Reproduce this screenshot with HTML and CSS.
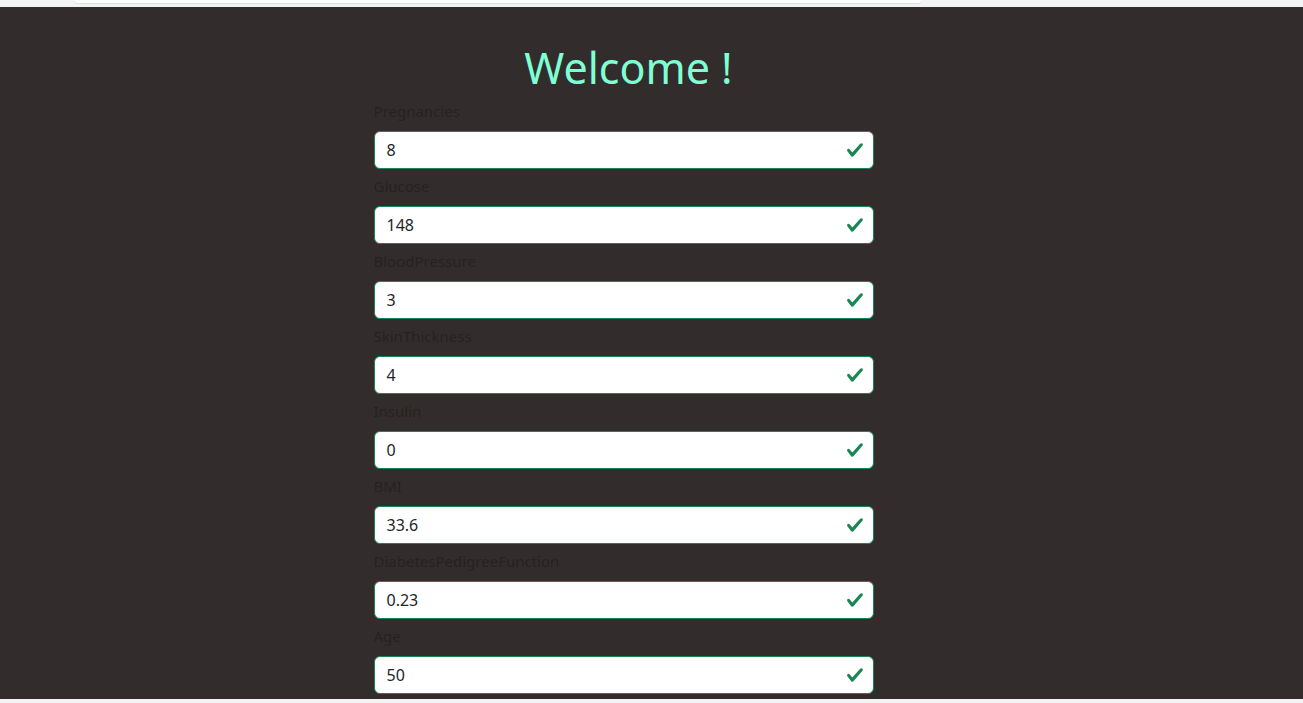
FILE: index.html
```html
<!DOCTYPE html>
<html>
<head>
<meta charset="utf-8">
<link rel="stylesheet" href="styles.css">
</head>
<body>
<div class="chrome-top"><div class="chrome-box"></div></div>
<main class="page">
  <div class="wrap">
    <h1 class="title">Welcome !</h1>
    <form class="form">
      <div class="field"><label class="label">Pregnancies</label><div class="control"><span class="value">8</span><svg class="check" viewBox="0 0 8 8"><path fill="#198754" d="M2.3 6.73.6 4.53c-.4-1.04.46-1.4 1.1-.8l1.1 1.4 3.4-3.8c.6-.63 1.6-.27 1.2.7l-4 4.6c-.43.5-.8.4-1.1.1z"/></svg></div></div>
      <div class="field"><label class="label">Glucose</label><div class="control"><span class="value">148</span><svg class="check" viewBox="0 0 8 8"><path fill="#198754" d="M2.3 6.73.6 4.53c-.4-1.04.46-1.4 1.1-.8l1.1 1.4 3.4-3.8c.6-.63 1.6-.27 1.2.7l-4 4.6c-.43.5-.8.4-1.1.1z"/></svg></div></div>
      <div class="field"><label class="label">BloodPressure</label><div class="control"><span class="value">3</span><svg class="check" viewBox="0 0 8 8"><path fill="#198754" d="M2.3 6.73.6 4.53c-.4-1.04.46-1.4 1.1-.8l1.1 1.4 3.4-3.8c.6-.63 1.6-.27 1.2.7l-4 4.6c-.43.5-.8.4-1.1.1z"/></svg></div></div>
      <div class="field"><label class="label">SkinThickness</label><div class="control"><span class="value">4</span><svg class="check" viewBox="0 0 8 8"><path fill="#198754" d="M2.3 6.73.6 4.53c-.4-1.04.46-1.4 1.1-.8l1.1 1.4 3.4-3.8c.6-.63 1.6-.27 1.2.7l-4 4.6c-.43.5-.8.4-1.1.1z"/></svg></div></div>
      <div class="field"><label class="label">Insulin</label><div class="control"><span class="value">0</span><svg class="check" viewBox="0 0 8 8"><path fill="#198754" d="M2.3 6.73.6 4.53c-.4-1.04.46-1.4 1.1-.8l1.1 1.4 3.4-3.8c.6-.63 1.6-.27 1.2.7l-4 4.6c-.43.5-.8.4-1.1.1z"/></svg></div></div>
      <div class="field"><label class="label">BMI</label><div class="control"><span class="value">33.6</span><svg class="check" viewBox="0 0 8 8"><path fill="#198754" d="M2.3 6.73.6 4.53c-.4-1.04.46-1.4 1.1-.8l1.1 1.4 3.4-3.8c.6-.63 1.6-.27 1.2.7l-4 4.6c-.43.5-.8.4-1.1.1z"/></svg></div></div>
      <div class="field"><label class="label">DiabetesPedigreeFunction</label><div class="control"><span class="value">0.23</span><svg class="check" viewBox="0 0 8 8"><path fill="#198754" d="M2.3 6.73.6 4.53c-.4-1.04.46-1.4 1.1-.8l1.1 1.4 3.4-3.8c.6-.63 1.6-.27 1.2.7l-4 4.6c-.43.5-.8.4-1.1.1z"/></svg></div></div>
      <div class="field"><label class="label">Age</label><div class="control"><span class="value">50</span><svg class="check" viewBox="0 0 8 8"><path fill="#198754" d="M2.3 6.73.6 4.53c-.4-1.04.46-1.4 1.1-.8l1.1 1.4 3.4-3.8c.6-.63 1.6-.27 1.2.7l-4 4.6c-.43.5-.8.4-1.1.1z"/></svg></div></div>
    </form>
  </div>
</main>
<div class="chrome-bottom"></div>
</body>
</html>
```

FILE: styles.css
```css
* { box-sizing: border-box; }
html, body { margin: 0; padding: 0; height: 703px; overflow: hidden; }
body {
  font-family: "Noto Sans", "Open Sans", sans-serif;
  background: #322d2c;
  display: flex;
  flex-direction: column;
}
.chrome-top {
  height: 7px;
  background: #f1f3f4;
  padding: 0 382px 0 75px;
}
.chrome-box {
  height: 3px;
  background: #ffffff;
  border-radius: 0 0 6px 6px;
  box-shadow: 0 1px 1px rgba(0,0,0,0.08);
}
.page {
  flex: 1;
  background: #322d2c;
  padding: 0 56px 0 0;
  overflow: hidden;
}
.wrap {
  width: 500px;
  margin: 0 auto;
}
.title {
  margin: 34px 0 5px;
  font-weight: 400;
  font-size: 43px;
  line-height: 53px;
  color: #7fffd4;
  text-align: center;
  padding-left: 10px;
}
.form { display: flex; flex-direction: column; }
.field { display: flex; flex-direction: column; }
.label {
  display: block;
  color: #262222;
  font-size: 15px;
  line-height: 24px;
  margin: 5px 0 8px;
}
.field:first-child .label { margin-top: 0; }
.control {
  position: relative;
  height: 38px;
  background: #fff;
  border: 1px solid #198754;
  border-radius: 6px;
  padding: 0 12px;
  display: flex;
  align-items: center;
}
.value {
  color: #212529;
  font-size: 16px;
}
.check {
  position: absolute;
  right: 9px;
  top: 9px;
  width: 18px;
  height: 18px;
}
.chrome-bottom {
  height: 4px;
  background: #f1f3f4;
}
```
